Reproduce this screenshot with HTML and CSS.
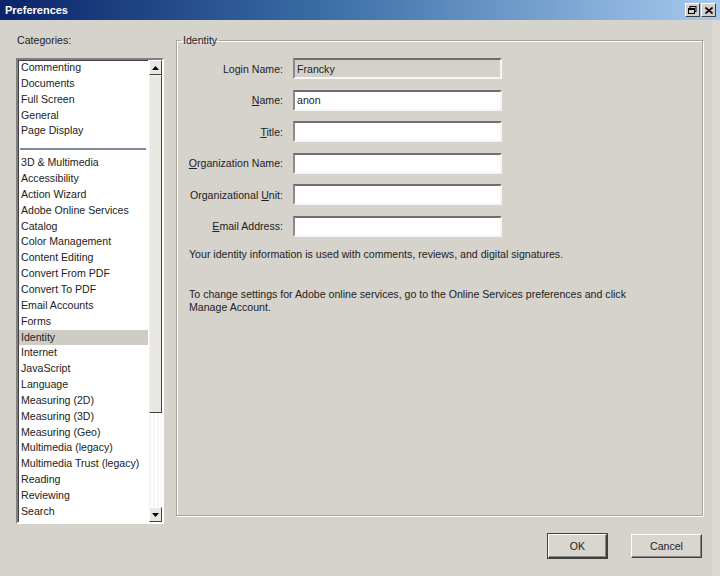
FILE: index.html
```html
<!DOCTYPE html>
<html lang="en">
<head>
  <meta charset="UTF-8" />
  <title>Preferences</title>
  <link rel="stylesheet" href="styles.css">
</head>
<body>
  <div class="ventana">
    <div class="barra-titulo">
      <span class="titulo">Preferences</span>
      <div class="controles">
        <span class="ctrl">
          <svg width="9" height="8" viewBox="0 0 9 8"><rect x="2" y="0.5" width="6" height="5" fill="none" stroke="#000"/><rect x="0.5" y="2.5" width="6" height="5" fill="#d4d0c8" stroke="#000"/><rect x="1" y="3" width="5" height="1" fill="#000"/></svg>
        </span>
        <span class="ctrl">
          <svg width="8" height="7" viewBox="0 0 8 7"><path d="M0.5 0.5 L7.5 6.5 M7.5 0.5 L0.5 6.5" stroke="#000" stroke-width="1.6"/></svg>
        </span>
      </div>
    </div>

    <div class="contenido">
      <div class="lateral">
        <div class="etiqueta-cat">Categories:</div>
        <div class="lista">
          <ul class="items">
            <li>Commenting</li>
            <li>Documents</li>
            <li>Full Screen</li>
            <li>General</li>
            <li>Page Display</li>
            <li class="separador"></li>
            <li>3D &amp; Multimedia</li>
            <li>Accessibility</li>
            <li>Action Wizard</li>
            <li>Adobe Online Services</li>
            <li>Catalog</li>
            <li>Color Management</li>
            <li>Content Editing</li>
            <li>Convert From PDF</li>
            <li>Convert To PDF</li>
            <li>Email Accounts</li>
            <li>Forms</li>
            <li class="activo">Identity</li>
            <li>Internet</li>
            <li>JavaScript</li>
            <li>Language</li>
            <li>Measuring (2D)</li>
            <li>Measuring (3D)</li>
            <li>Measuring (Geo)</li>
            <li>Multimedia (legacy)</li>
            <li>Multimedia Trust (legacy)</li>
            <li>Reading</li>
            <li>Reviewing</li>
            <li>Search</li>
            <li>Security</li>
          </ul>
          <div class="scroll">
            <span class="flecha">
              <svg width="7" height="4" viewBox="0 0 7 4"><path d="M3.5 0 L7 4 L0 4 Z" fill="#000"/></svg>
            </span>
            <div class="pulgar"></div>
            <div class="pista"></div>
            <span class="flecha">
              <svg width="7" height="4" viewBox="0 0 7 4"><path d="M0 0 L7 0 L3.5 4 Z" fill="#000"/></svg>
            </span>
          </div>
        </div>
      </div>

      <fieldset class="grupo">
        <legend>Identity</legend>
        <div class="formulario">
          <label>Login Name:</label>
          <input type="text" class="solo-lectura" value="Francky" readonly />
          <label><u>N</u>ame:</label>
          <input type="text" value="anon" />
          <label><u>T</u>itle:</label>
          <input type="text" />
          <label><u>O</u>rganization Name:</label>
          <input type="text" />
          <label>Organizational <u>U</u>nit:</label>
          <input type="text" />
          <label><u>E</u>mail Address:</label>
          <input type="text" />
        </div>
        <p class="nota">Your identity information is used with comments, reviews, and digital signatures.</p>
        <p class="nota segunda">To change settings for Adobe online services, go to the Online Services preferences and click Manage Account.</p>
      </fieldset>
    </div>

    <div class="pie">
      <button class="boton principal">OK</button>
      <button class="boton">Cancel</button>
    </div>
  </div>
</body>
</html>
```

FILE: styles.css
```css
* {
  box-sizing: border-box;
}

body {
  margin: 0;
  font-family: "Liberation Sans", Arial, sans-serif;
  font-size: 10.6px;
  color: #222;
  background-color: #d4d0c8;
}

.ventana {
  width: 720px;
  height: 576px;
  background-color: #d6d3cd;
  border-right: 8px solid #dcd9d3;
  display: flex;
  flex-direction: column;
}

.barra-titulo {
  height: 20px;
  background: linear-gradient(to right, #0a246a 0%, #3a6ea5 45%, #a6caf0 100%);
  display: flex;
  align-items: center;
  justify-content: space-between;
  padding: 0 0 0 5px;
  margin-right: -8px;
}

.titulo {
  color: #fff;
  font-weight: bold;
  font-size: 11px;
}

.controles {
  display: flex;
  gap: 1px;
  margin-right: 4px;
}

.ctrl {
  width: 15px;
  height: 14px;
  background-color: #d4d0c8;
  border: 1px solid;
  border-color: #fff #404040 #404040 #fff;
  display: flex;
  align-items: center;
  justify-content: center;
}

.contenido {
  display: flex;
  gap: 12px;
  padding: 14px 0 0 16px;
  height: 496px;
}

.lateral {
  width: 148px;
}

.etiqueta-cat {
  height: 24px;
  padding-left: 1px;
}

.lista {
  height: 466px;
  display: flex;
  background-color: #fff;
  border: 2px solid;
  border-color: #808080 #fff #fff #808080;
  box-shadow: inset 1px 1px 0 #404040;
  overflow: hidden;
}

.items {
  list-style: none;
  margin: 0;
  padding: 0 0 0 1px;
  flex: 1;
  overflow: hidden;
}

.items li {
  height: 15.85px;
  line-height: 15.85px;
  padding-left: 2px;
  white-space: nowrap;
}

.items li.separador {
  height: 16px;
  position: relative;
}

.items li.separador::after {
  content: "";
  position: absolute;
  left: 1px;
  right: 2px;
  top: 9px;
  border-top: 2px solid #7e8a99;
}

.items li.activo {
  background-color: #cfccc6;
}

.scroll {
  width: 14px;
  display: flex;
  flex-direction: column;
  border-left: 1px solid #fff;
}

.flecha {
  height: 15px;
  background-color: #e9e7e3;
  border: 1px solid;
  border-color: #fff #404040 #404040 #fff;
  display: flex;
  align-items: center;
  justify-content: center;
}

.pulgar {
  height: 338px;
  background-color: #e9e7e3;
  border: 1px solid;
  border-color: #f4f3f1 #404040 #404040 #f4f3f1;
}

.pista {
  flex: 1;
  background: repeating-linear-gradient(to right, #f6f5f3 0 2px, #fff 2px 4px);
}

.grupo {
  width: 527px;
  height: 482px;
  margin: 0;
  padding: 12px 12px 0 11px;
  border: 1px solid #a9a59d;
  box-shadow: 1px 1px 0 #fff, inset 1px 1px 0 #fff;
}

.grupo legend {
  padding: 0 2px;
  margin-left: -7px;
}

.formulario {
  display: grid;
  grid-template-columns: 95px 209px;
  column-gap: 10px;
  row-gap: 10.6px;
  align-items: center;
}

.formulario label {
  text-align: right;
}

.formulario input {
  height: 21px;
  margin: 0;
  padding: 0 2px;
  font-family: "Liberation Sans", Arial, sans-serif;
  font-size: 10.6px;
  color: #222;
  background-color: #fff;
  border: 2px solid;
  border-color: #6e6e6e #f6f5f3 #f6f5f3 #8a8a8a;
  outline: none;
}

.formulario input.solo-lectura {
  background-color: #d4d1cb;
}

.nota {
  margin: 11px 0 0 1px;
  line-height: 13px;
  width: 440px;
}

.nota.segunda {
  margin-top: 27px;
}

.pie {
  display: flex;
  justify-content: flex-end;
  gap: 24px;
  padding: 18px 10px 0 0;
}

.boton {
  height: 24px;
  font-family: "Liberation Sans", Arial, sans-serif;
  font-size: 10.6px;
  color: #222;
  background-color: #d9d6d0;
  border: 1px solid;
  border-color: #fff #404040 #404040 #fff;
  box-shadow: inset -1px -1px 0 #8a8782;
  padding: 0;
  width: 71px;
}

.boton.principal {
  width: 59px;
  outline: 1px solid #404040;
}
```
